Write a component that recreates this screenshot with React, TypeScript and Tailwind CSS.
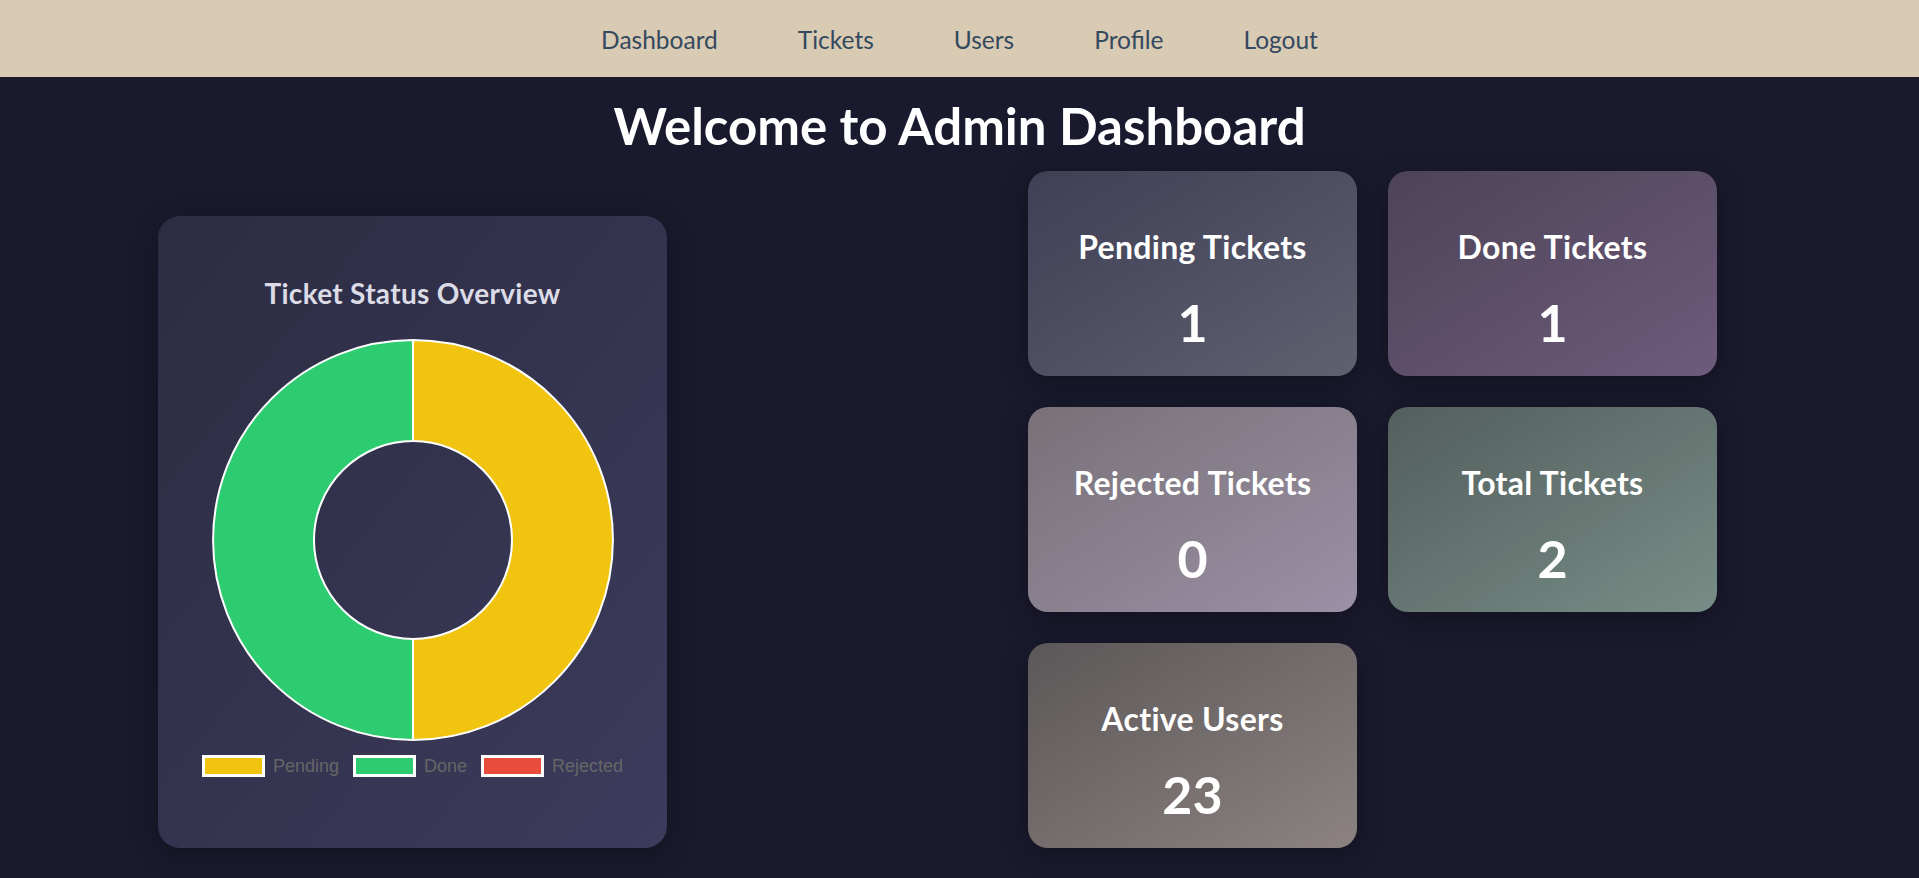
import React from "react";

const navItems = ["Dashboard", "Tickets", "Users", "Profile", "Logout"];

const stats = [
  { label: "Pending Tickets", value: "1", cls: "bg-gradient-to-br from-[#3f3f56] to-[#5f606f]" },
  { label: "Done Tickets", value: "1", cls: "bg-gradient-to-br from-[#4d4357] to-[#6d5b7c]" },
  { label: "Rejected Tickets", value: "0", cls: "bg-gradient-to-br from-[#787177] to-[#9b90a6]" },
  { label: "Total Tickets", value: "2", cls: "bg-gradient-to-br from-[#535f5d] to-[#788d87]" },
  { label: "Active Users", value: "23", cls: "bg-gradient-to-br from-[#5c5758] to-[#8c8381]" },
];

function Donut() {
  const c = 203;
  const R = 200;
  const r = 99;
  return (
    <svg width={406} height={406} viewBox="0 0 406 406">
      <path
        d={`M ${c} ${c - R} A ${R} ${R} 0 0 1 ${c} ${c + R} L ${c} ${c + r} A ${r} ${r} 0 0 0 ${c} ${c - r} Z`}
        fill="#f1c40f"
        stroke="#ffffff"
        strokeWidth={2}
      />
      <path
        d={`M ${c} ${c + R} A ${R} ${R} 0 0 1 ${c} ${c - R} L ${c} ${c - r} A ${r} ${r} 0 0 0 ${c} ${c + r} Z`}
        fill="#2ecc71"
        stroke="#ffffff"
        strokeWidth={2}
      />
    </svg>
  );
}

function LegendItem({ color, label }: { color: string; label: string }) {
  return (
    <div className="flex items-center gap-[8px]">
      <span className={`block w-[63px] h-[22px] border-[3px] border-white ${color}`} />
      <span className="text-[18px] leading-[22px] text-[#666666] font-['Liberation_Sans',Arial,sans-serif]">
        {label}
      </span>
    </div>
  );
}

export default function App() {
  return (
    <div className="min-h-screen bg-[#1a1a2e] font-['Lato','Noto_Sans',sans-serif]">
      <nav className="h-[77px] bg-[#d9cab3] flex items-center justify-center gap-[80px]">
        {navItems.map((n) => (
          <a key={n} className="text-[24.5px] leading-none text-[#34495e] cursor-pointer pt-[4px]">
            {n}
          </a>
        ))}
      </nav>
      <h1 className="text-center text-white font-bold text-[51px] leading-[60px] mt-[19px]">
        Welcome to Admin Dashboard
      </h1>
      <main className="flex items-end pl-[158px] mt-[15px] pb-[30px]">
        <section className="w-[509px] h-[632px] rounded-[22px] bg-gradient-to-br from-[#2c2c43] to-[#3c3b5c] shadow-[0_6px_24px_rgba(0,0,0,0.35)] flex flex-col items-center pt-[61px]">
          <h2 className="text-[28px] leading-[32px] font-bold text-[#dcdce6] tracking-[0.3px]">Ticket Status Overview</h2>
          <div className="mt-[28px]">
            <Donut />
          </div>
          <div className="mt-[12px] flex items-center gap-[14px]">
            <LegendItem color="bg-[#f1c40f]" label="Pending" />
            <LegendItem color="bg-[#2ecc71]" label="Done" />
            <LegendItem color="bg-[#e74c3c]" label="Rejected" />
          </div>
        </section>
        <div className="ml-[361px] grid grid-cols-[329px_329px] gap-x-[31px] gap-y-[31px]">
          {stats.map((s) => (
            <div
              key={s.label}
              className={`h-[205px] rounded-[20px] ${s.cls} shadow-[0_6px_24px_rgba(0,0,0,0.35)] flex flex-col items-center pt-[57px]`}
            >
              <h3 className="text-[32px] leading-[38px] font-bold text-white tracking-[0.3px]">{s.label}</h3>
              <div className="mt-[25px] text-[52px] leading-[62px] font-bold text-white">{s.value}</div>
            </div>
          ))}
        </div>
      </main>
    </div>
  );
}
